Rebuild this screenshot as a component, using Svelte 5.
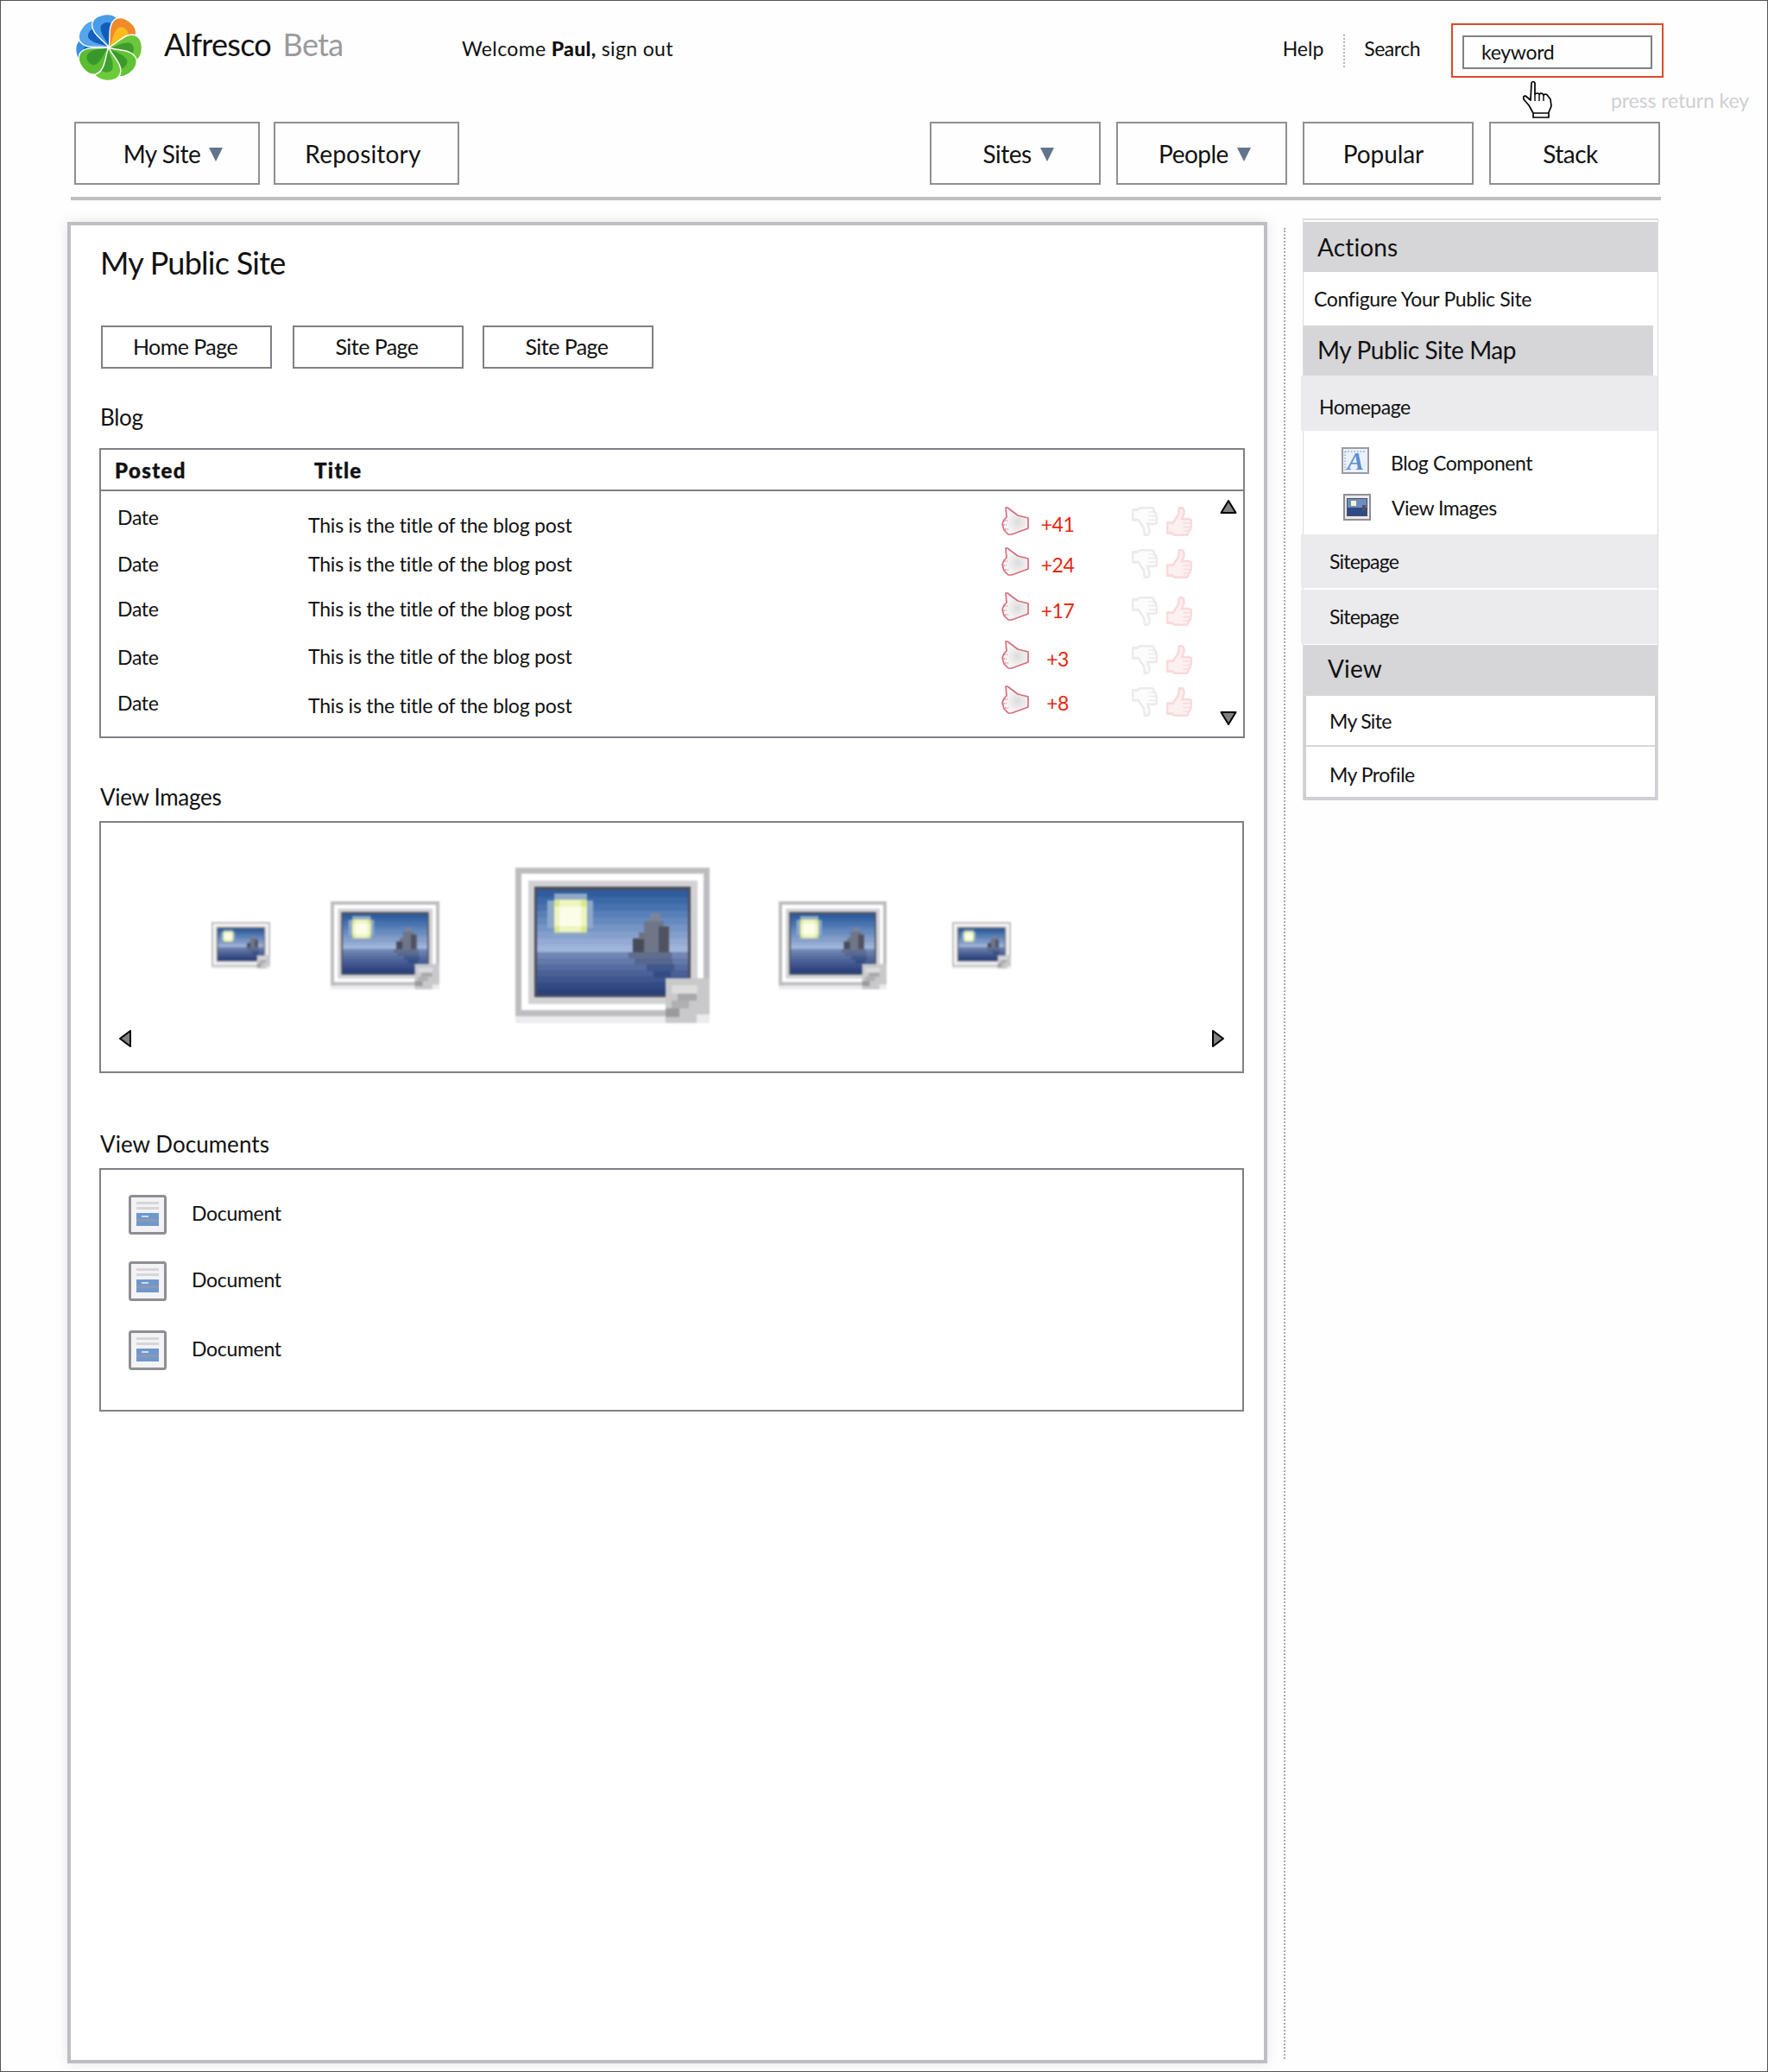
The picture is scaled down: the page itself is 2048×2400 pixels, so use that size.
<script>
	// Blog rows: the wireframe's rows aren't evenly spaced, so each one keeps its own offsets.
	const rows = [
		{ h: 47, date: -2, title: 7, count: 6, thumbs: 0, votes: '+41' },
		{ h: 52, date: 5, title: 5, count: 6, thumbs: 2, votes: '+24' },
		{ h: 56, date: 5, title: 5, count: 7, thumbs: 5, votes: '+17' },
		{ h: 52, date: 5, title: 4, count: 7, thumbs: 5, votes: '+3' },
		{ h: 50, date: 6, title: 9, count: 6, thumbs: 2, votes: '+8' }
	];

	const gallery = [
		{ w: 68, h: 54, left: 128 },
		{ w: 126, h: 102, left: 70 },
		{ w: 225, h: 180, left: 88 },
		{ w: 125, h: 102, left: 80 },
		{ w: 68, h: 54, left: 76 }
	];

	const docs = [{ gap: 0 }, { gap: 31 }, { gap: 34 }];

	// sky and sea of the sample picture, drawn as the blocky bands of the upscaled icon
	const sky = ['#2f5c9e', '#3a68a8', '#4873b0', '#587fb8', '#668abf', '#7695c6', '#859fcc', '#93abd4', '#9fb5da'];
	const sea = ['#7286b4', '#6379aa', '#566ca0', '#4a6097', '#3f558d', '#344a84', '#2b417c'];

	const sun = [
		[37, 38, 53, 32, '#8ea9c8'],
		[45, 30, 38, 48, '#8fabc6'],
		[45, 37, 38, 38, '#dbe78f'],
		[51, 37, 25, 38, '#eef5bd'],
		[45, 45, 38, 23, '#eef5bd'],
		[51, 45, 25, 23, '#fbfde8']
	];

	const ship = [
		[156, 53, 12, 14, '#7d8497'],
		[149, 62, 23, 36, '#6f7688'],
		[166, 68, 12, 30, '#50535f'],
		[136, 82, 13, 16, '#474a58'],
		[143, 75, 7, 8, '#6c7284'],
		[131, 98, 50, 7, '#5f6d8f'],
		[138, 105, 44, 7, '#55678f'],
		[152, 112, 32, 8, '#3f5789'],
		[160, 120, 20, 7, '#334d83']
	];

	const petals = [
		{ a: -100, c: '#3a90e0', d: '#1263c0' },
		{ a: -52, c: '#55a6ea', d: '#125fbe' },
		{ a: -8, c: '#4a9ce6', d: '#0f5dbb' },
		{ a: 40, c: '#f08a2a', d: '#fbbb1e' },
		{ a: 92, c: '#6cc63c', d: '#3f9c2e' },
		{ a: 138, c: '#62c236', d: '#3a9a2c' },
		{ a: 184, c: '#6ccb3a', d: '#3f9f30' },
		{ a: 232, c: '#5cbc34', d: '#38982c' }
	];
</script>

{#snippet picture(w, h, left)}
	<svg class="pic" width={w} height={h} viewBox="0 0 225 180" preserveAspectRatio="none" style:margin-left="{left}px">
		<rect x="0" y="172" width="225" height="8" fill="#ececee" />
		<rect x="0" y="0" width="225" height="172" fill="#bdbdbf" />
		<rect x="7" y="7" width="211" height="158" fill="#fff" />
		<rect x="15" y="15" width="196" height="143" fill="#d2d2d5" />
		<rect x="22" y="22" width="181" height="128" fill="#4b4e5c" />
		{#each sky as c, i}
			<rect x="25" y={26 + i * 8} width="175" height="8.5" fill={c} />
		{/each}
		{#each sea as c, i}
			<rect x="25" y={98 + i * 7} width="175" height="7.5" fill={c} />
		{/each}
		{#each sun as [x, y, sw, sh, c]}
			<rect {x} {y} width={sw} height={sh} fill={c} />
		{/each}
		{#each ship as [x, y, sw, sh, c]}
			<rect {x} {y} width={sw} height={sh} fill={c} />
		{/each}
		<rect x="174" y="128" width="51" height="52" fill="#c9c9cb" />
		<rect x="181" y="136" width="30" height="10" fill="#dcdcdd" />
		<rect x="188" y="146" width="22" height="8" fill="#a8a8ab" />
		<rect x="181" y="154" width="20" height="9" fill="#b0b0b2" />
		<rect x="174" y="163" width="16" height="10" fill="#9a9a9d" />
		<rect x="210" y="170" width="15" height="10" fill="#ececee" />
	</svg>
{/snippet}

{#snippet pointer()}
	<svg class="hand" width="32" height="34" viewBox="0 0 32 34">
		<defs>
			<radialGradient id="palm" cx="0.6" cy="0.55" r="0.6">
				<stop offset="0" stop-color="#dcdcdc" />
				<stop offset="1" stop-color="#fff" />
			</radialGradient>
		</defs>
		<path d="M5 1 L7 1 L19 10 L31 13 L31 25 L12 32 H8 L3 27 L1 20 L3 15 L6 12 Z" fill="url(#palm)" stroke="#d76d7e" stroke-width="1.7" stroke-linejoin="round" />
		<path d="M3 16 H7 M2 21 H6 M4 26 H8" stroke="#e08a98" stroke-width="1.3" stroke-dasharray="2 1" />
	</svg>
{/snippet}

{#snippet thumb(cls)}
	<svg class={cls} width="30" height="34" viewBox="1 1 28 29" preserveAspectRatio="none">
		<path d="M2 17 H8 L14 9 L15 2 Q21 1 20 8 L18 13 H26 Q29 14 28 17 Q29 20 27 21 Q28 24 25 25 Q25 29 22 29 H10 L7 27 H2 Z" />
		<path class="fingers" d="M19 17 H27 M19 21 H26 M19 25 H24" />
	</svg>
{/snippet}

{#snippet tri(dir)}
	<svg class="tri" width="20" height="20" viewBox="0 0 20 20">
		{#if dir === 'up'}
			<path d="M10 2 L18.5 16 H1.5 Z" />
		{:else if dir === 'down'}
			<path d="M10 17 L1.5 3 H18.5 Z" />
		{:else if dir === 'left'}
			<path d="M2 10 L14 1 V19 Z" />
		{:else}
			<path d="M18 10 L6 1 V19 Z" />
		{/if}
	</svg>
{/snippet}

{#snippet docIcon()}
	<svg class="doc-icon" width="44" height="46" viewBox="0 0 44 46">
		<rect x="1.5" y="1.5" width="41" height="43" rx="2" fill="#f3f3f6" stroke="#8f8f93" stroke-width="3" />
		<rect x="9" y="8" width="26" height="3" fill="#d6d6da" />
		<rect x="9" y="14" width="26" height="3" fill="#d6d6da" />
		<rect x="9" y="21" width="26" height="15" fill="#7097cd" />
		<rect x="9" y="28" width="26" height="3" fill="#8a9ab0" />
		<rect x="15" y="24" width="8" height="2" fill="#c9dcef" />
	</svg>
{/snippet}

<div class="page">
	<header class="top">
		<svg class="logo" width="78" height="78" viewBox="-39 -39 78 78">
			{#each petals as p}
				<g transform="rotate({p.a})">
					<path d="M0 0 C-5 -10 -19 -19 -15 -31 C-10 -41 10 -41 15 -31 C19 -20 5 -10 0 0 Z" fill={p.c} stroke="#fff" stroke-width="1.4" />
					<path d="M0 -1 C-1 -9 -8 -16 -6 -25 C-3 -31 8 -30 9 -23 C10 -14 3 -8 0 -1 Z" fill={p.d} />
				</g>
			{/each}
			<circle r="2.5" fill="#fff" />
		</svg>
		<div class="brand">Alfresco <span>Beta</span></div>
		<div class="welcome">Welcome <b>Paul,</b> sign out</div>
		<a class="help">Help</a>
		<i class="sep"></i>
		<a class="search">Search</a>
		<div class="searchbox">
			<div class="input">keyword</div>
			<svg class="cursor" width="36" height="44" viewBox="0 0 36 44">
				<path d="M10 3 Q12 0 14 3 V16 Q17 14 19 16 Q22 14 24 17 Q27 15 29 18 L32 22 L33 30 L30 37 V43 H12 V38 L7 29 L1 22 Q0 18 3 18 L9 23 Z" fill="#fff" stroke="#000" stroke-width="1.7" stroke-linejoin="round" />
				<path d="M14 16 V24 M19 16 V24 M24 17 V24 M12 38 H30" fill="none" stroke="#000" stroke-width="1.4" />
			</svg>
			<span class="hint">press return key</span>
		</div>
	</header>

	<nav class="nav">
		<div class="nav-group left">
			<a class="tab wide my-site-tab">My Site <i class="caret"></i></a>
			<a class="tab wide repo-tab">Repository</a>
		</div>
		<div class="nav-group right">
			<a class="tab menu-tab">Sites <i class="caret"></i></a>
			<a class="tab menu-tab">People <i class="caret"></i></a>
			<a class="tab popular-tab">Popular</a>
			<a class="tab stack-tab">Stack</a>
		</div>
	</nav>
	<div class="rule"></div>

	<div class="body">
		<main class="panel">
			<h1>My Public Site</h1>
			<div class="pages">
				<a class="page-btn">Home Page</a>
				<a class="page-btn">Site Page</a>
				<a class="page-btn">Site Page</a>
			</div>

			<h2 class="blog-label">Blog</h2>
			<section class="box blog">
				<div class="thead">
					<span class="th-posted">Posted</span>
					<span>Title</span>
				</div>
				<div class="tbody">
					<div class="rows">
						{#each rows as r}
							<div class="row" style:height="{r.h}px">
								<span class="date" style:margin-top="{r.date}px">Date</span>
								<span class="title" style:margin-top="{r.title}px">This is the title of the blog post</span>
								{@render pointer()}
								<span class="count" style:margin-top="{r.count}px">{r.votes}</span>
								<div class="votes" style:margin-top="{r.thumbs}px">
									{@render thumb('down')}
									{@render thumb('up')}
								</div>
							</div>
						{/each}
					</div>
					<div class="scroll">
						{@render tri('up')}
						{@render tri('down')}
					</div>
				</div>
			</section>

			<h2 class="images-label">View Images</h2>
			<section class="box images">
				<div class="strip">
					{#each gallery as g}
						{@render picture(g.w, g.h, g.left)}
					{/each}
				</div>
				<div class="pager">
					{@render tri('left')}
					{@render tri('right')}
				</div>
			</section>

			<h2 class="docs-label">View Documents</h2>
			<section class="box docs">
				{#each docs as d}
					<div class="doc" style:margin-top="{d.gap}px">
						{@render docIcon()}
						<span>Document</span>
					</div>
				{/each}
			</section>
		</main>

		<div class="aside-line">
			<aside class="side">
				<div class="head actions">Actions</div>
				<div class="config">Configure Your Public Site</div>
				<div class="head map">My Public Site Map</div>
				<div class="light home">Homepage</div>
				<div class="children">
					<div class="child first">
						<svg width="32" height="31" viewBox="0 0 32 31">
							<rect x="1" y="1" width="30" height="29" fill="#eaf1fa" stroke="#9a9aa0" stroke-width="2" />
							<path d="M4 5 H28 M4 5 V27" stroke="#8fa9cf" stroke-width="1.4" stroke-dasharray="1.5 2" fill="none" />
							<text x="16" y="26" text-anchor="middle" class="glyph">A</text>
						</svg>
						<span>Blog Component</span>
					</div>
					<div class="child second">
						<svg width="32" height="31" viewBox="0 0 32 31">
							<rect x="1" y="1" width="30" height="29" fill="#e9e9ec" stroke="#8f8f95" stroke-width="2" />
							<rect x="4" y="5" width="24" height="21" fill="#4b4e5c" />
							<rect x="5" y="6" width="22" height="10" fill="#6d8cc0" />
							<rect x="5" y="16" width="22" height="9" fill="#2f4a85" />
							<rect x="9" y="8" width="6" height="6" fill="#f3f8c8" />
							<rect x="22" y="13" width="4" height="7" fill="#4e5262" />
						</svg>
						<span>View Images</span>
					</div>
				</div>
				<div class="light site one">Sitepage</div>
				<div class="light site two">Sitepage</div>
				<div class="head view">View</div>
				<div class="view-list">
					<div class="my-site">My Site</div>
					<div class="my-profile">My Profile</div>
				</div>
			</aside>
		</div>
	</div>
</div>

<style>
	:global(body) {
		margin: 0;
		background: #fff;
	}
	.page {
		box-sizing: border-box;
		width: 2048px;
		height: 2400px;
		border: 1px solid #555;
		background: #fefefe;
		color: #111;
		font-family: Lato, 'Noto Sans', sans-serif;
		font-size: 23px;
		line-height: 28px;
		overflow: hidden;
	}
	a {
		color: inherit;
	}
	.top {
		display: flex;
		align-items: baseline;
		height: 140px;
		box-sizing: border-box;
		padding: 29px 0 0 86px;
	}
	.logo {
		align-self: flex-start;
		margin-top: -14px;
	}
	.brand {
		margin-left: 25px;
		font-size: 36px;
		line-height: 43px;
		letter-spacing: -0.7px;
		width: 344px;
	}
	.brand span {
		color: #9a9a9e;
		margin-left: 5px;
	}
	.welcome {
		margin-left: 1px;
		letter-spacing: 0.35px;
	}
	.welcome b {
		font-weight: 900;
	}
	.help {
		margin-left: auto;
	}
	.sep {
		align-self: flex-start;
		margin: 10px 22px 0 23px;
		height: 38px;
		border-left: 2px dotted #b5b5b5;
	}
	.search {
		letter-spacing: -0.5px;
	}
	.searchbox {
		position: relative;
		align-self: flex-start;
		box-sizing: border-box;
		width: 246px;
		height: 63px;
		margin: -3px 120px 0 36px;
		padding: 12px 11px;
		border: 2px solid #dc4a28;
	}
	.input {
		box-sizing: border-box;
		height: 39px;
		padding: 3px 20px;
		border: 2px solid #808085;
		letter-spacing: -0.3px;
	}
	.cursor {
		position: absolute;
		left: 81px;
		top: 64px;
	}
	.hint {
		position: absolute;
		left: 183px;
		top: 73px;
		color: #cfcfd2;
		white-space: nowrap;
		letter-spacing: -0.1px;
	}
	.nav {
		display: flex;
		justify-content: space-between;
		margin: 0 124px 0 85px;
	}
	.nav-group {
		display: flex;
	}
	.nav-group.left {
		gap: 16px;
	}
	.nav-group.right {
		gap: 18px;
	}
	.tab {
		box-sizing: border-box;
		display: flex;
		align-items: center;
		justify-content: center;
		gap: 10px;
		width: 198px;
		height: 73px;
		border: 2px solid #8f8f94;
		font-size: 28px;
		letter-spacing: -0.5px;
	}
	.tab.wide {
		width: 215px;
	}
	.my-site-tab {
		padding-left: 14px;
	}
	.repo-tab {
		padding-right: 8px;
		letter-spacing: 0.2px;
	}
	.menu-tab {
		padding-left: 7px;
	}
	.popular-tab {
		padding-right: 11px;
		letter-spacing: -0.1px;
	}
	.stack-tab {
		padding-right: 10px;
	}
	.caret {
		width: 0;
		height: 0;
		margin-top: 3px;
		border-style: solid;
		border-width: 16px 8px 0;
		border-color: #62748c transparent transparent;
	}
	.rule {
		height: 4px;
		margin: 14px 123px 0 81px;
		background: #bfbfc1;
	}
	.body {
		display: flex;
		align-items: flex-start;
		margin: 25px 0 0 77px;
	}
	.panel {
		box-sizing: border-box;
		flex: none;
		width: 1390px;
		height: 2133px;
		padding: 22px 0 0 35px;
		border: 4px solid #bfbec2;
		background: #fff;
		box-shadow: 0 0 14px rgba(0, 0, 0, 0.1);
	}
	h1 {
		margin: 0 0 0 -1px;
		font-size: 36px;
		line-height: 43px;
		font-weight: 400;
		letter-spacing: -0.75px;
	}
	h2 {
		margin: 0 0 0 -1px;
		font-size: 26px;
		line-height: 31px;
		font-weight: 400;
		letter-spacing: -0.3px;
	}
	.pages {
		display: flex;
		gap: 22px;
		margin-top: 51px;
	}
	.page-btn {
		box-sizing: border-box;
		display: flex;
		align-items: center;
		justify-content: center;
		width: 198px;
		height: 50px;
		padding: 0 3px 3px 0;
		border: 2px solid #808085;
		font-size: 25px;
		letter-spacing: -0.55px;
	}
	.page-btn:first-child {
		margin-right: 2px;
	}
	.blog-label {
		margin-top: 41px;
	}
	.box {
		box-sizing: border-box;
		width: 1326px;
		margin-left: -2px;
		border: 2px solid #808085;
	}
	.blog {
		width: 1327px;
		height: 336px;
		margin-top: 20px;
		display: flex;
		flex-direction: column;
	}
	.thead {
		display: flex;
		flex: none;
		box-sizing: border-box;
		height: 48px;
		padding: 10px 0 0 16px;
		border-bottom: 2px solid #808085;
		font-size: 24px;
		font-weight: 900;
		letter-spacing: 1.4px;
		-webkit-text-stroke: 0.4px #111;
	}
	.th-posted {
		width: 231px;
	}
	.tbody {
		flex: 1;
		display: flex;
	}
	.rows {
		flex: 1;
		padding: 18px 0 0 19px;
	}
	.row {
		display: flex;
		align-items: flex-start;
	}
	.date {
		width: 221px;
		flex: none;
		letter-spacing: -0.3px;
	}
	.title {
		width: 803px;
		flex: none;
		letter-spacing: -0.2px;
	}
	.hand {
		flex: none;
	}
	.count {
		flex: none;
		width: 50px;
		margin-left: 8px;
		text-align: center;
		color: #e8270f;
		letter-spacing: -0.5px;
	}
	.votes {
		display: flex;
		gap: 10px;
		margin-left: 61px;
	}
	.votes :global(svg) {
		display: block;
	}
	.down {
		transform: scaleY(-1);
		fill: #fcfcfd;
		stroke: #ebebee;
		stroke-width: 2.4;
		filter: blur(0.6px);
	}
	.up {
		fill: #fdf0f0;
		stroke: #f9dada;
		stroke-width: 2.4;
		filter: blur(0.6px);
	}
	.fingers {
		fill: none;
		stroke-width: 1.2;
	}
	.scroll {
		flex: none;
		display: flex;
		flex-direction: column;
		justify-content: space-between;
		width: 20px;
		margin-right: 7px;
		padding: 9px 0 11px;
	}
	.tri {
		display: block;
		fill: #808084;
		stroke: #000;
		stroke-width: 2;
		stroke-linejoin: round;
	}
	.images-label {
		margin-top: 53px;
	}
	.images {
		height: 292px;
		margin-top: 12px;
		padding-top: 52px;
	}
	.strip {
		display: flex;
		align-items: center;
		height: 180px;
	}
	.pic {
		flex: none;
		display: block;
		filter: blur(1px);
	}
	.pager {
		display: flex;
		justify-content: space-between;
		margin-top: 8px;
		padding: 0 20px;
	}
	.docs-label {
		margin-top: 67px;
		letter-spacing: 0.05px;
	}
	.docs {
		height: 282px;
		margin-top: 12px;
		padding: 29px 0 0 32px;
	}
	.doc {
		display: flex;
		align-items: flex-start;
		gap: 29px;
		letter-spacing: -0.3px;
	}
	.doc span {
		margin-top: 7px;
	}
	.doc-icon {
		display: block;
	}
	.aside-line {
		flex: none;
		box-sizing: border-box;
		height: 2121px;
		margin: 7px 0 0 19px;
		border-left: 2px dotted #a9a9ad;
	}
	.side {
		box-sizing: border-box;
		width: 412px;
		margin: -11px 0 0 20px;
		padding-top: 2px;
		border: solid #dcdcdf;
		border-width: 2px 1px 0;
		background: #fff;
	}
	.head {
		box-sizing: border-box;
		height: 58px;
		background: #d6d5d8;
		font-size: 28px;
		line-height: 34px;
		letter-spacing: 0.15px;
	}
	.actions {
		padding: 12px 0 0 16px;
	}
	.config {
		box-sizing: border-box;
		height: 62px;
		padding: 17px 0 0 12px;
		letter-spacing: -0.35px;
	}
	.map {
		margin-right: 5px;
		padding: 11px 0 0 16px;
		letter-spacing: -0.4px;
	}
	.light {
		box-sizing: border-box;
		margin-left: -3px;
		background: #ebebee;
	}
	.home {
		height: 64px;
		padding: 22px 0 0 21px;
		letter-spacing: -0.5px;
	}
	.children {
		height: 120px;
		box-sizing: border-box;
		padding-top: 19px;
	}
	.child {
		display: flex;
		align-items: flex-start;
		height: 54px;
	}
	.child svg {
		flex: none;
	}
	.child span {
		margin: 4px 0 0 25px;
	}
	.child.first {
		padding-left: 44px;
		letter-spacing: -0.4px;
	}
	.child.second {
		padding-left: 46px;
		letter-spacing: -0.5px;
	}
	.child.second span {
		margin: 2px 0 0 24px;
	}
	.glyph {
		font-family: 'Liberation Serif', serif;
		font-weight: 700;
		font-style: italic;
		font-size: 29px;
		fill: #5c8fd0;
	}
	.site {
		letter-spacing: -0.8px;
	}
	.site.one {
		height: 62px;
		padding: 17px 0 0 33px;
	}
	.site.two {
		height: 63px;
		margin-top: 2px;
		padding: 17px 0 0 33px;
	}
	.view {
		height: 59px;
		margin-top: 1px;
		padding: 10px 0 0 28px;
	}
	.view-list {
		border: solid #d0d0d4;
		border-width: 0 3px 4px;
	}
	.my-site {
		box-sizing: border-box;
		height: 59px;
		padding: 15px 0 0 27px;
		border-bottom: 2px solid #d8d8db;
		letter-spacing: -0.7px;
	}
	.my-profile {
		box-sizing: border-box;
		height: 58px;
		padding: 18px 0 0 27px;
		letter-spacing: -0.5px;
	}
</style>
